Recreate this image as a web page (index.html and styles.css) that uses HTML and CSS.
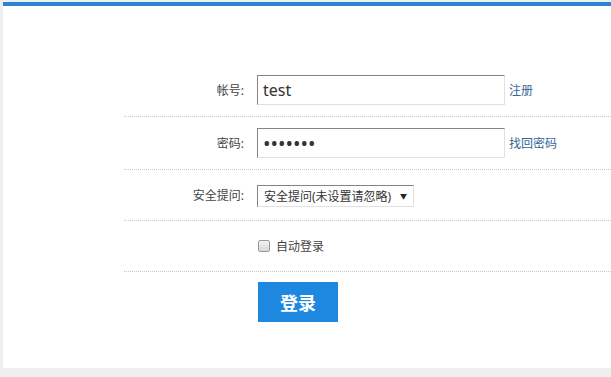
FILE: index.html
```html
<!DOCTYPE html>
<html lang="zh-CN">
<head>
<meta charset="utf-8">
<title>登录</title>
<link rel="stylesheet" href="styles.css">
</head>
<body>
<div class="page">
  <form class="login">
    <div class="row row-tall">
      <label class="lbl" for="u">帐号:</label>
      <input class="txt" id="u" type="text" value="test">
      <a class="link" href="#">注册</a>
    </div>
    <div class="row row-tall">
      <label class="lbl" for="p">密码:</label>
      <input class="txt pwd" id="p" type="password" value="1234567">
      <a class="link" href="#">找回密码</a>
    </div>
    <div class="row">
      <label class="lbl" for="q">安全提问:</label>
      <span class="sel-wrap">
        <select class="sel" id="q"><option>安全提问(未设置请忽略)</option></select>
        <span class="arrow">▼</span>
      </span>
    </div>
    <div class="row">
      <span class="lbl"></span>
      <label class="chk"><input type="checkbox"> <span>自动登录</span></label>
    </div>
    <div class="row-btn">
      <span class="lbl"></span>
      <button class="btn" type="button">登录</button>
    </div>
  </form>
</div>
</body>
</html>
```
FILE: styles.css
```css
html, body {
  margin: 0;
  padding: 0;
  background: #efefef;
  height: 100%;
}
body {
  font-family: "Noto Sans", "Noto Sans CJK SC", sans-serif;
  font-size: 12px;
  color: #333;
  padding-top: 2px;
  box-sizing: border-box;
}
.page {
  margin-left: 3px;
  background: #fff;
  border-top: 4px solid #2a83d5;
  height: 366px;
  padding-top: 58px;
  box-sizing: border-box;
}
.login {
  margin-left: 121px;
}
.row {
  display: flex;
  align-items: center;
  height: 50px;
  border-bottom: 1px dotted #c8c8c8;
}
.row-tall {
  height: 52px;
}
.lbl {
  width: 120px;
  margin-right: 13px;
  text-align: right;
  color: #444;
  font-size: 12px;
  flex: none;
}
.txt {
  width: 248px;
  height: 30px;
  box-sizing: border-box;
  border: 1px solid;
  border-color: #848484 #e0e0e0 #e0e0e0 #848484;
  padding: 0 5px;
  font-family: "Noto Sans", "Noto Sans CJK SC", sans-serif;
  font-size: 16px;
  color: #333;
  outline: none;
  margin: 0;
}
.pwd {
  font-size: 20px;
  letter-spacing: 0;
  color: #333;
}
.link {
  margin-left: 4px;
  color: #336699;
  text-decoration: none;
  font-size: 12px;
}
.sel-wrap {
  position: relative;
  display: inline-block;
  margin-top: 2px;
}
.sel {
  appearance: none;
  -webkit-appearance: none;
  width: 157px;
  height: 22px;
  box-sizing: border-box;
  border: 1px solid;
  border-color: #848484 #e0e0e0 #e0e0e0 #848484;
  background: #fff;
  padding: 0 0 0 6px;
  font-family: "Noto Sans", "Noto Sans CJK SC", sans-serif;
  font-size: 12px;
  color: #333;
  margin: 0;
  border-radius: 0;
}
.arrow {
  position: absolute;
  right: 7px;
  top: 6px;
  font-size: 7px;
  color: #222;
  pointer-events: none;
}
.chk {
  display: flex;
  align-items: center;
  color: #444;
  font-size: 12px;
}
.chk input {
  appearance: none;
  -webkit-appearance: none;
  box-sizing: border-box;
  margin: 0 6px 0 1px;
  width: 12px;
  height: 12px;
  border: 1px solid #9a9a9a;
  border-radius: 2px;
  background: linear-gradient(#f2f2f2, #d8d8d8);
}
.row-btn {
  display: flex;
  padding-top: 10px;
}
.btn {
  width: 80px;
  height: 40px;
  border: none;
  background: #1e88e0;
  color: #fff;
  font-family: "Noto Sans CJK SC", sans-serif;
  font-size: 18px;
  font-weight: bold;
  margin-left: 1px;
  padding: 0;
}
```
